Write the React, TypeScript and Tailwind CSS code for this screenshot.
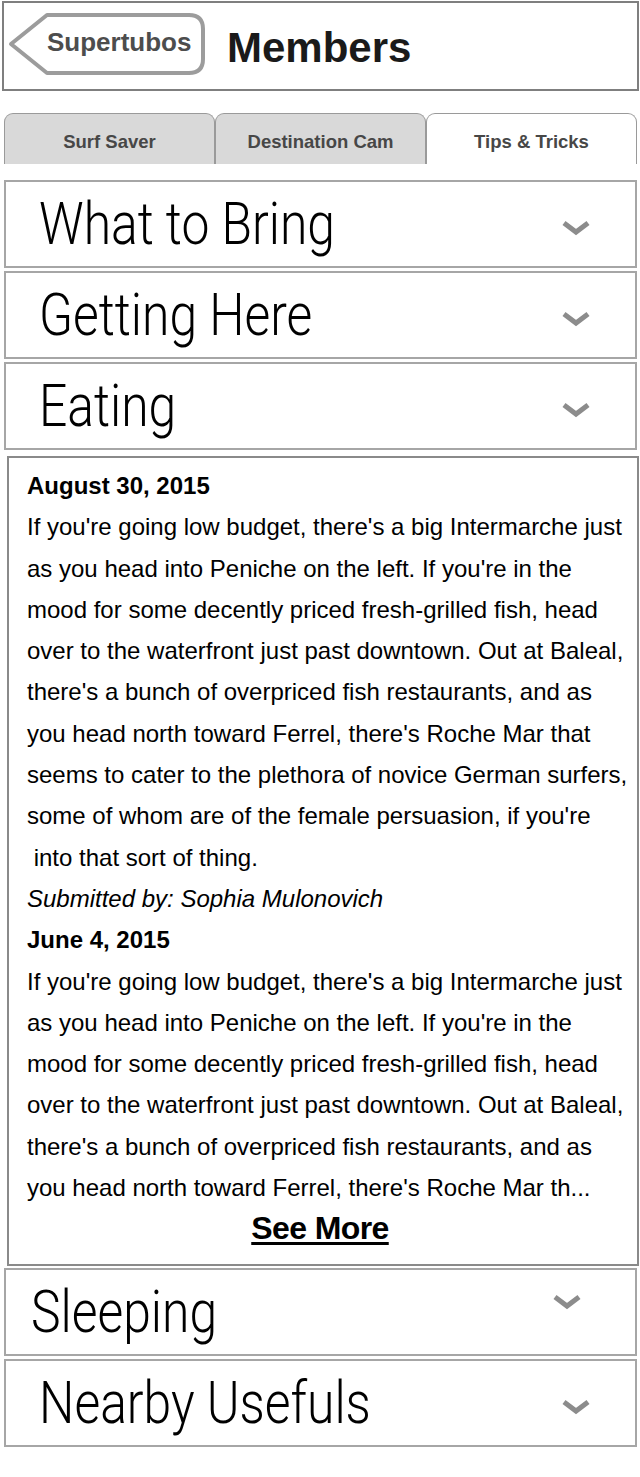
import React from "react";

const Chevron = () => (
  <svg width="30" height="16" viewBox="0 0 30 16" className="shrink-0">
    <path d="M3 3 L15 12 L27 3" fill="none" stroke="#8c8c8c" strokeWidth="5" strokeLinejoin="miter" />
  </svg>
);

const Section = ({ title, textPl = "pl-[33px]", chevPr = "pr-[44px]", chevClass = "mt-[8px]" }: { title: string; textPl?: string; chevPr?: string; chevClass?: string }) => (
  <div className={`ml-[4px] w-[633px] h-[88px] border-2 border-[#a6a6a6] flex items-center justify-between ${textPl} ${chevPr}`}>
    <span className="inline-block origin-left scale-x-[0.83] text-[60px] leading-none font-light text-black whitespace-nowrap" style={{ fontFamily: "Roboto, 'Liberation Sans', sans-serif" }}>
      {title}
    </span>
    <span className={chevClass}>
      <Chevron />
    </span>
  </div>
);

const post1 = [
  "If you're going low budget, there's a big Intermarche just",
  "as you head into Peniche on the left. If you're in the",
  "mood for some decently priced fresh-grilled fish, head",
  "over to the waterfront just past downtown. Out at Baleal,",
  "there's a bunch of overpriced fish restaurants, and as",
  "you head north toward Ferrel, there's Roche Mar that",
  "seems to cater to the plethora of novice German surfers,",
  "some of whom are of the female persuasion, if you're",
  "\u00a0into that sort of thing.",
];

const post2 = [
  "If you're going low budget, there's a big Intermarche just",
  "as you head into Peniche on the left. If you're in the",
  "mood for some decently priced fresh-grilled fish, head",
  "over to the waterfront just past downtown. Out at Baleal,",
  "there's a bunch of overpriced fish restaurants, and as",
  "you head north toward Ferrel, there's Roche Mar th...",
];

export default function App() {
  return (
    <div className="w-[640px] h-[1477px] bg-white" style={{ fontFamily: "'Liberation Sans', Arial, sans-serif" }}>
      {/* Header */}
      <div className="mt-[1px] ml-[2px] w-[637px] h-[90px] border-2 border-[#7f7f7f] flex items-center">
        <div className="relative ml-[4px] w-[200px] h-[68px] mt-[-3px] shrink-0">
          <svg className="absolute inset-0" width="200" height="68" viewBox="0 0 200 68">
            <path
              d="M39 4 L181 4 Q195 4 195 18 L195 48 Q195 62 181 62 L39 62 L3 33 Z"
              fill="white"
              stroke="#9c9c9c"
              strokeWidth="4"
              strokeLinejoin="round"
            />
          </svg>
          <div className="relative h-full flex items-center pl-[39px] pb-[4px]">
            <span className="text-[26px] font-bold text-[#4d4d4d]">Supertubos</span>
          </div>
        </div>
        <span className="ml-[19px] mt-[4px] text-[42px] font-bold text-[#1a1a1a] leading-none">Members</span>
      </div>

      {/* Tabs */}
      <div className="mt-[22px] ml-[4px] w-[633px] h-[51px] flex">
        <div className="flex-1 border border-b-0 border-[#9a9a9a] rounded-t-[9px] bg-[#d9d9d9] flex items-center justify-center pt-[5px]">
          <span className="text-[18.5px] font-bold text-[#474747]">Surf Saver</span>
        </div>
        <div className="flex-1 border border-b-0 border-[#9a9a9a] rounded-t-[9px] bg-[#d9d9d9] flex items-center justify-center pt-[5px]">
          <span className="text-[18.5px] font-bold text-[#474747]">Destination Cam</span>
        </div>
        <div className="flex-1 border border-b-0 border-[#9a9a9a] rounded-t-[9px] bg-white flex items-center justify-center pt-[5px]">
          <span className="text-[18.5px] font-bold text-[#474747]">Tips &amp; Tricks</span>
        </div>
      </div>

      {/* Accordion */}
      <div className="mt-[16px] flex flex-col gap-[3px]">
        <Section title="What to Bring" />
        <Section title="Getting Here" />
        <Section title="Eating" />
      </div>

      {/* Content */}
      <div className="mt-[6px] ml-[7px] w-[632px] border-2 border-[#8a8a8a] pl-[18px] pt-[7px] pb-[14px] text-[24px] leading-[41.3px] text-black">
        <div className="font-bold">August 30, 2015</div>
        {post1.map((l, i) => (
          <div key={i} className="whitespace-nowrap">{l}</div>
        ))}
        <div className="italic">Submitted by: Sophia Mulonovich</div>
        <div className="font-bold">June 4, 2015</div>
        {post2.map((l, i) => (
          <div key={i} className="whitespace-nowrap">{l}</div>
        ))}
        <div className="flex justify-center pr-[24px]">
          <span className="text-[32px] font-bold underline underline-offset-[3px] tracking-[-0.6px]">See More</span>
        </div>
      </div>

      <div className="mt-[2px] flex flex-col gap-[3px]">
        <Section title="Sleeping" textPl="pl-[25px]" chevPr="pr-[53px]" chevClass="mb-[20px]" />
        <Section title="Nearby Usefuls" chevClass="mt-[8px]" />
      </div>
    </div>
  );
}
